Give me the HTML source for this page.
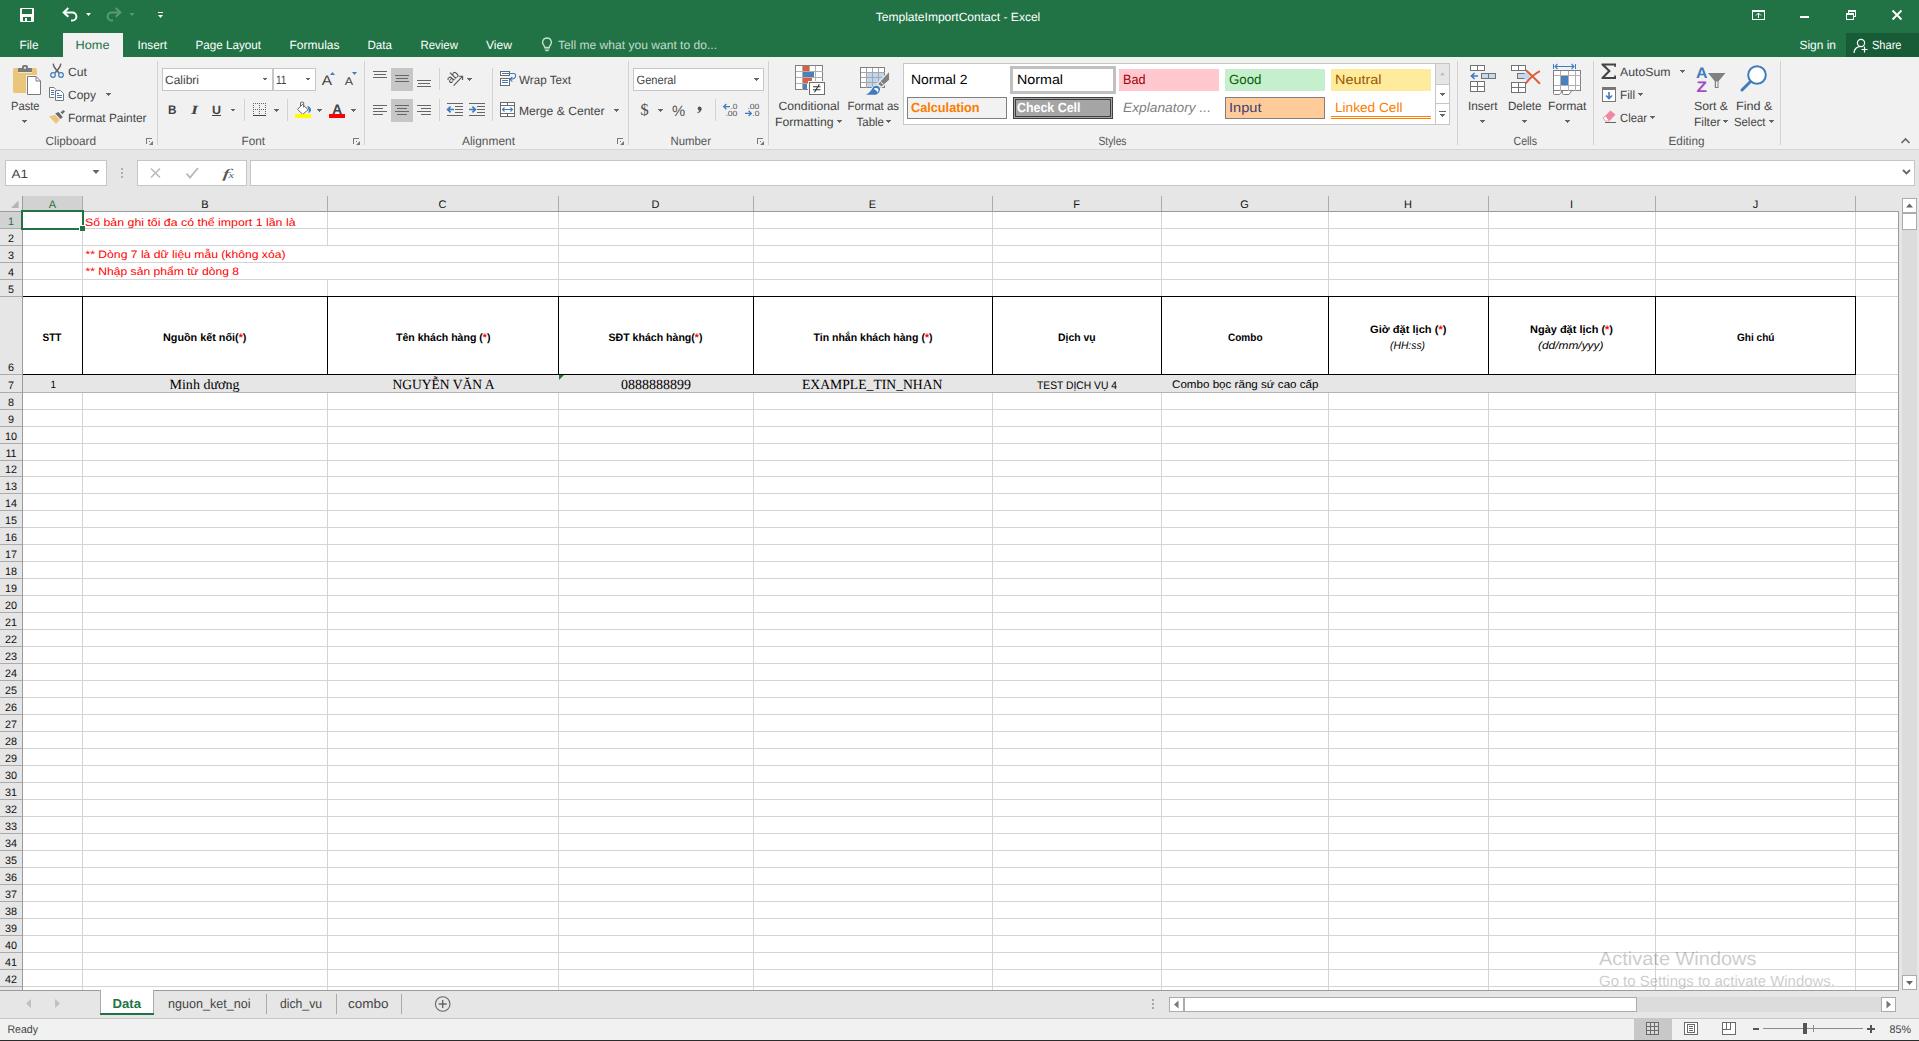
<!DOCTYPE html>
<html><head><meta charset="utf-8"><title>TemplateImportContact - Excel</title>
<style>
html,body{margin:0;padding:0;background:#fff;overflow:hidden}
svg{display:block}
svg{font-family:"Liberation Sans",sans-serif}
text{white-space:pre}
</style></head>
<body>
<svg width="1919" height="1041" viewBox="0 0 1919 1041" shape-rendering="crispEdges" text-rendering="geometricPrecision">
<rect x="0" y="0" width="1919" height="1041" fill="#FFFFFF" />
<rect x="0" y="0" width="1919" height="57" fill="#217346" />
<rect x="0" y="57" width="1919" height="92" fill="#F1F1F1" />
<rect x="0" y="149" width="1919" height="1" fill="#D6D6D6" />
<rect x="0" y="150" width="1919" height="62" fill="#E6E6E6" />
<rect x="0" y="991" width="1919" height="27" fill="#E6E6E6" />
<rect x="0" y="1018" width="1919" height="1" fill="#C6C6C6" />
<rect x="0" y="1019" width="1919" height="21" fill="#F1F1F1" />
<rect x="0" y="1040" width="1919" height="1" fill="#2B2B2B" />
<g shape-rendering="geometricPrecision">
<rect x="20" y="8" width="14" height="14" fill="#fff" rx="1"/>
<rect x="22" y="9" width="10" height="5" fill="#217346" />
<rect x="23" y="17" width="8" height="4" fill="#217346" />
<rect x="25" y="18" width="2" height="3" fill="#fff" />
<path d="M64 12.400h8.300a4.100 4.100 0 0 1 0 8.200h-1.300" fill="none" stroke="#fff" stroke-width="2" />
<path d="M68.3 8.100l-4.600 4.300l4.600 4.300" fill="none" stroke="#fff" stroke-width="2" />
<path d="M86.0 13.0h5l-2.5 3z" fill="#fff" />
<path d="M120 12.400h-8.300a4.100 4.100 0 0 0 0 8.200h1.300" fill="none" stroke="#5B9A78" stroke-width="2" />
<path d="M115.7 8.100l4.600 4.300l-4.600 4.300" fill="none" stroke="#5B9A78" stroke-width="2" />
<path d="M129.5 13.0h5l-2.5 3z" fill="#5B9A78" />
<rect x="158" y="12" width="5" height="1" fill="#fff" />
<path d="M158.0 15.0h5l-2.5 3z" fill="#fff" />
</g>
<text x="875.70" y="20.80" font-size="12" fill="#fff" textLength="164.60" lengthAdjust="spacingAndGlyphs">TemplateImportContact - Excel</text>
<g shape-rendering="crispEdges">
<rect x="1752.5" y="10.5" width="12" height="9" fill="none" stroke="#fff" stroke-width="1" />
<rect x="1752" y="10" width="13" height="2" fill="#fff" />
<path d="M1758.5 18v-4.5M1756 15.5l2.5-2.5l2.5 2.5" fill="none" stroke="#fff" stroke-width="1" shape-rendering="geometricPrecision"/>
<rect x="1800" y="16" width="9" height="2" fill="#fff" />
<rect x="1846.5" y="13.5" width="7" height="6" fill="none" stroke="#fff" stroke-width="1" />
<path d="M1848.5 13v-2.5h7v6h-2" fill="none" stroke="#fff" stroke-width="1" />
<rect x="1846" y="13" width="8" height="2" fill="#fff" />
<rect x="1848" y="10" width="8" height="2" fill="#fff" />
</g>
<path d="M1892.5 10.5l9 9M1901.5 10.5l-9 9" fill="none" stroke="#fff" stroke-width="1.8" shape-rendering="geometricPrecision"/>
<rect x="63" y="33" width="60" height="24" fill="#F1F1F1" />
<text x="19.50" y="49.40" font-size="12" fill="#fff" textLength="19.00" lengthAdjust="spacingAndGlyphs">File</text>
<text x="75.50" y="49.40" font-size="12" fill="#217346" textLength="34.00" lengthAdjust="spacingAndGlyphs">Home</text>
<text x="137.50" y="49.40" font-size="12" fill="#fff" textLength="29.50" lengthAdjust="spacingAndGlyphs">Insert</text>
<text x="195.50" y="49.40" font-size="12" fill="#fff" textLength="65.50" lengthAdjust="spacingAndGlyphs">Page Layout</text>
<text x="289.50" y="49.40" font-size="12" fill="#fff" textLength="50.00" lengthAdjust="spacingAndGlyphs">Formulas</text>
<text x="367.50" y="49.40" font-size="12" fill="#fff" textLength="24.50" lengthAdjust="spacingAndGlyphs">Data</text>
<text x="420.50" y="49.40" font-size="12" fill="#fff" textLength="37.50" lengthAdjust="spacingAndGlyphs">Review</text>
<text x="486.00" y="49.40" font-size="12" fill="#fff" textLength="26.00" lengthAdjust="spacingAndGlyphs">View</text>
<g shape-rendering="geometricPrecision">
<path d="M547 38a4.400 4.400 0 0 1 2.900 7.700l-.6 1.800h-4.600l-.6-1.800a4.400 4.400 0 0 1 2.900-7.700z" fill="none" stroke="#C3DBCD" stroke-width="1.3" />
<path d="M544.5 49h5M545.3 50.700h3.400" fill="none" stroke="#C3DBCD" stroke-width="1.2" />
</g>
<text x="558.00" y="49.00" font-size="12" fill="#C3DBCD" textLength="159.00" lengthAdjust="spacingAndGlyphs">Tell me what you want to do...</text>
<text x="1799.50" y="49.00" font-size="12" fill="#fff" textLength="36.50" lengthAdjust="spacingAndGlyphs">Sign in</text>
<rect x="1846" y="33" width="73" height="24" fill="#185C37" />
<g shape-rendering="geometricPrecision">
<circle cx="1861" cy="43" r="3.6" fill="none" stroke="#fff" stroke-width="1.2"/>
<path d="M1854 53c0-4 3-6.5 6.5-6.5" fill="none" stroke="#fff" stroke-width="1.2" />
<path d="M1864.5 46.5v6M1861.5 49.5h6" fill="none" stroke="#fff" stroke-width="1.2" />
</g>
<text x="1872.00" y="49.00" font-size="12" fill="#fff" textLength="29.50" lengthAdjust="spacingAndGlyphs">Share</text>
<rect x="157" y="61" width="1" height="84" fill="#D2D2D2" />
<rect x="364" y="61" width="1" height="84" fill="#D2D2D2" />
<rect x="628" y="61" width="1" height="84" fill="#D2D2D2" />
<rect x="768" y="61" width="1" height="84" fill="#D2D2D2" />
<rect x="1457" y="61" width="1" height="84" fill="#D2D2D2" />
<rect x="1593" y="61" width="1" height="84" fill="#D2D2D2" />
<rect x="1780" y="61" width="1" height="84" fill="#D2D2D2" />
<rect x="244" y="99" width="1" height="22" fill="#D2D2D2" />
<rect x="287" y="99" width="1" height="22" fill="#D2D2D2" />
<rect x="439" y="68" width="1" height="22" fill="#D2D2D2" />
<rect x="439" y="99" width="1" height="22" fill="#D2D2D2" />
<rect x="492" y="68" width="1" height="53" fill="#D2D2D2" />
<rect x="715" y="99" width="1" height="22" fill="#D2D2D2" />
<text x="45.50" y="145.00" font-size="12" fill="#555" textLength="50.50" lengthAdjust="spacingAndGlyphs">Clipboard</text>
<text x="241.50" y="145.00" font-size="12" fill="#555" textLength="23.50" lengthAdjust="spacingAndGlyphs">Font</text>
<text x="462.00" y="145.00" font-size="12" fill="#555" textLength="53.00" lengthAdjust="spacingAndGlyphs">Alignment</text>
<text x="670.50" y="145.00" font-size="12" fill="#555" textLength="40.50" lengthAdjust="spacingAndGlyphs">Number</text>
<text x="1098.50" y="145.00" font-size="12" fill="#555" textLength="28.00" lengthAdjust="spacingAndGlyphs">Styles</text>
<text x="1513.50" y="145.00" font-size="12" fill="#555" textLength="23.50" lengthAdjust="spacingAndGlyphs">Cells</text>
<text x="1668.50" y="145.00" font-size="12" fill="#555" textLength="36.00" lengthAdjust="spacingAndGlyphs">Editing</text>
<rect x="146" y="138" width="6" height="1" fill="#777" />
<rect x="146" y="138" width="1" height="6" fill="#777" />
<rect x="149" y="141" width="1" height="1" fill="#777" />
<path d="M153 141v4h-4z" fill="#777" shape-rendering="geometricPrecision"/>
<rect x="353" y="138" width="6" height="1" fill="#777" />
<rect x="353" y="138" width="1" height="6" fill="#777" />
<rect x="356" y="141" width="1" height="1" fill="#777" />
<path d="M360 141v4h-4z" fill="#777" shape-rendering="geometricPrecision"/>
<rect x="617" y="138" width="6" height="1" fill="#777" />
<rect x="617" y="138" width="1" height="6" fill="#777" />
<rect x="620" y="141" width="1" height="1" fill="#777" />
<path d="M624 141v4h-4z" fill="#777" shape-rendering="geometricPrecision"/>
<rect x="757" y="138" width="6" height="1" fill="#777" />
<rect x="757" y="138" width="1" height="6" fill="#777" />
<rect x="760" y="141" width="1" height="1" fill="#777" />
<path d="M764 141v4h-4z" fill="#777" shape-rendering="geometricPrecision"/>
<g shape-rendering="geometricPrecision">
<rect x="13" y="68" width="24" height="25" fill="#EBC57A" rx="1.5"/>
<rect x="18" y="72" width="14" height="1" fill="#F3E6C8" />
<path d="M18 72v-3.3q0-.7.7-.7h3.3v-1.2q0-1.8 1.8-1.8h2.4q1.8 0 1.8 1.8v1.2h3.3q.7 0 .7.7v3.3z" fill="#7A7A7A" />
<circle cx="25" cy="67.8" r="1.1" fill="#F1F1F1"/>
<path d="M27.5 76.5h8.5l4.5 4.5V94.5h-13z" fill="#fff" stroke="#F1F1F1" stroke-width="3" />
<path d="M27.5 76.5h8.5l4.5 4.5V94.5h-13z" fill="#fff" stroke="#7A7A7A" stroke-width="1" />
<path d="M36 76.5v4.5h4.5" fill="none" stroke="#7A7A7A" stroke-width="1" />
</g>
<text x="11.00" y="110.00" font-size="12" fill="#444444" textLength="28.50" lengthAdjust="spacingAndGlyphs">Paste</text>
<path d="M22.0 120.0h5l-2.5 3z" fill="#666" />
<g shape-rendering="geometricPrecision">
<path d="M53.2 63.6c.3 3.5 2.5 6 5.8 9.3M60.8 63.6c-.3 3.5-2.5 6-5.8 9.3" fill="none" stroke="#666" stroke-width="1.5" />
<circle cx="53" cy="75" r="2.3" fill="none" stroke="#3F7BBF" stroke-width="1.2"/>
<circle cx="61" cy="75" r="2.3" fill="none" stroke="#3F7BBF" stroke-width="1.2"/>
</g>
<text x="68.00" y="76.00" font-size="12" fill="#444444" textLength="19.00" lengthAdjust="spacingAndGlyphs">Cut</text>
<g shape-rendering="geometricPrecision">
<path d="M49.5 87.5h4.5l2.5 2.5v7.5h-7z" fill="#fff" stroke="#777" stroke-width="1" />
<path d="M55.5 90.5h5l3 3v7h-8z" fill="#fff" stroke="#F1F1F1" stroke-width="2.5" />
<path d="M55.5 90.5h5l3 3v7h-8z" fill="#fff" stroke="#777" stroke-width="1" />
</g>
<g shape-rendering="crispEdges">
<rect x="51" y="90" width="3" height="1" fill="#3F7BBF" />
<rect x="51" y="92" width="3" height="1" fill="#3F7BBF" />
<rect x="51" y="94" width="3" height="1" fill="#3F7BBF" />
<rect x="57" y="93" width="2" height="1" fill="#3F7BBF" />
<rect x="57" y="95" width="5" height="1" fill="#3F7BBF" />
<rect x="57" y="97" width="5" height="1" fill="#3F7BBF" />
</g>
<text x="68.00" y="99.00" font-size="12" fill="#444444" textLength="28.00" lengthAdjust="spacingAndGlyphs">Copy</text>
<path d="M106.0 93.0h5l-2.5 3z" fill="#666" />
<g shape-rendering="geometricPrecision">
<path d="M49.1 116.5l5.9-1.8l4.7 5.3l-3.7 3.7z" fill="#EBC57A" />
<path d="M55.2 113.6l3.4-1.6l4.2 5.3l-2.4 1.8z" fill="#6A6A6A" />
<path d="M60.5 112.2l3-2.2l1.5 1.6l-2.7 2.6z" fill="#6A6A6A" />
</g>
<text x="68.00" y="122.00" font-size="12" fill="#444444" textLength="78.50" lengthAdjust="spacingAndGlyphs">Format Painter</text>
<rect x="162.5" y="68.5" width="110" height="22" fill="#fff" stroke="#C6C6C6" stroke-width="1" />
<rect x="273.5" y="68.5" width="42" height="22" fill="#fff" stroke="#C6C6C6" stroke-width="1" />
<text x="165.00" y="84.00" font-size="12" fill="#444444" textLength="34.00" lengthAdjust="spacingAndGlyphs">Calibri</text>
<path d="M262.5 78.0h5l-2.5 3z" fill="#666" />
<text x="276.00" y="84.00" font-size="12" fill="#444444" textLength="10.50" lengthAdjust="spacingAndGlyphs">11</text>
<path d="M305.5 78.0h5l-2.5 3z" fill="#666" />
<text x="321.70" y="84.90" font-size="14" fill="#444444" textLength="10.30" lengthAdjust="spacingAndGlyphs">A</text>
<path d="M330 75l2.500-3.100l2.500 3.100z" fill="#3F7BBF" shape-rendering="geometricPrecision"/>
<text x="344.70" y="84.90" font-size="11.2" fill="#444444" textLength="8.30" lengthAdjust="spacingAndGlyphs">A</text>
<path d="M352 72h5l-2.500 3.100z" fill="#3F7BBF" shape-rendering="geometricPrecision"/>
<text x="168.00" y="114.00" font-size="12.5" fill="#444444" font-weight="bold" textLength="8.50" lengthAdjust="spacingAndGlyphs">B</text>
<text x="191.00" y="114.00" font-size="12.5" fill="#444444" font-family="Liberation Serif" font-weight="bold" font-style="italic" textLength="7.00" lengthAdjust="spacingAndGlyphs">I</text>
<text x="212.00" y="113.50" font-size="12" fill="#444444" font-weight="bold" textLength="9.00" lengthAdjust="spacingAndGlyphs">U</text>
<rect x="212" y="115" width="9" height="1" fill="#444444" />
<path d="M230.5 109.0h5l-2.5 3z" fill="#666" />
<g shape-rendering="crispEdges">
<rect x="253" y="103" width="1" height="1" fill="#666" />
<rect x="253" y="109" width="1" height="1" fill="#666" />
<rect x="253" y="103" width="1" height="1" fill="#666" />
<rect x="259" y="103" width="1" height="1" fill="#666" />
<rect x="265" y="103" width="1" height="1" fill="#666" />
<rect x="255" y="103" width="1" height="1" fill="#666" />
<rect x="255" y="109" width="1" height="1" fill="#666" />
<rect x="253" y="105" width="1" height="1" fill="#666" />
<rect x="259" y="105" width="1" height="1" fill="#666" />
<rect x="265" y="105" width="1" height="1" fill="#666" />
<rect x="257" y="103" width="1" height="1" fill="#666" />
<rect x="257" y="109" width="1" height="1" fill="#666" />
<rect x="253" y="107" width="1" height="1" fill="#666" />
<rect x="259" y="107" width="1" height="1" fill="#666" />
<rect x="265" y="107" width="1" height="1" fill="#666" />
<rect x="259" y="103" width="1" height="1" fill="#666" />
<rect x="259" y="109" width="1" height="1" fill="#666" />
<rect x="253" y="109" width="1" height="1" fill="#666" />
<rect x="259" y="109" width="1" height="1" fill="#666" />
<rect x="265" y="109" width="1" height="1" fill="#666" />
<rect x="261" y="103" width="1" height="1" fill="#666" />
<rect x="261" y="109" width="1" height="1" fill="#666" />
<rect x="253" y="111" width="1" height="1" fill="#666" />
<rect x="259" y="111" width="1" height="1" fill="#666" />
<rect x="265" y="111" width="1" height="1" fill="#666" />
<rect x="263" y="103" width="1" height="1" fill="#666" />
<rect x="263" y="109" width="1" height="1" fill="#666" />
<rect x="253" y="113" width="1" height="1" fill="#666" />
<rect x="259" y="113" width="1" height="1" fill="#666" />
<rect x="265" y="113" width="1" height="1" fill="#666" />
<rect x="265" y="103" width="1" height="1" fill="#666" />
<rect x="265" y="109" width="1" height="1" fill="#666" />
<rect x="253" y="115" width="1" height="1" fill="#666" />
<rect x="259" y="115" width="1" height="1" fill="#666" />
<rect x="265" y="115" width="1" height="1" fill="#666" />
<rect x="253" y="115" width="13" height="1" fill="#444" />
</g>
<path d="M274.0 109.0h5l-2.5 3z" fill="#666" />
<g shape-rendering="geometricPrecision">
<path d="M297.5 109.4l5-5l5.600 5.300l-5.300 4.700z" fill="#fff" stroke="#666" stroke-width="1" />
<path d="M300.5 106.3v-3.300q0-.8.8-.8h1.600q.8 0 .8.8v4.600" fill="none" stroke="#666" stroke-width="1" />
<path d="M307.2 105.800c2.600.900 4.300 2.600 3.800 4.600c-.3 1.200-1.300 2.100-2.600 2.600c.5-2 .400-3.200-.2-4.300z" fill="#3F7BBF" />
</g>
<rect x="295" y="114" width="16" height="4" fill="#FFFF00" />
<path d="M317.0 109.0h5l-2.5 3z" fill="#666" />
<text x="332.30" y="114.00" font-size="13.8" fill="#444444" font-weight="bold" textLength="9.90" lengthAdjust="spacingAndGlyphs">A</text>
<rect x="329" y="114" width="16" height="4" fill="#FF0000" />
<path d="M351.0 109.0h5l-2.5 3z" fill="#666" />
<rect x="391" y="68" width="22" height="23" fill="#C6C6C6" />
<rect x="391" y="99" width="22" height="23" fill="#C6C6C6" />
<rect x="373.0" y="71" width="14" height="1" fill="#666" />
<rect x="374.0" y="74" width="12" height="1" fill="#666" />
<rect x="373.0" y="77" width="14" height="1" fill="#666" />
<rect x="395.0" y="75" width="14" height="1" fill="#666" />
<rect x="396.0" y="78" width="12" height="1" fill="#666" />
<rect x="395.0" y="81" width="14" height="1" fill="#666" />
<rect x="417.0" y="80" width="14" height="1" fill="#666" />
<rect x="418.0" y="83" width="12" height="1" fill="#666" />
<rect x="417.0" y="86" width="14" height="1" fill="#666" />
<rect x="373" y="105" width="14" height="1" fill="#666" />
<rect x="373" y="108" width="10" height="1" fill="#666" />
<rect x="373" y="111" width="14" height="1" fill="#666" />
<rect x="373" y="114" width="10" height="1" fill="#666" />
<rect x="395.0" y="105" width="14" height="1" fill="#666" />
<rect x="397.0" y="108" width="10" height="1" fill="#666" />
<rect x="395.0" y="111" width="14" height="1" fill="#666" />
<rect x="397.0" y="114" width="10" height="1" fill="#666" />
<rect x="417" y="105" width="14" height="1" fill="#666" />
<rect x="421" y="108" width="10" height="1" fill="#666" />
<rect x="417" y="111" width="14" height="1" fill="#666" />
<rect x="421" y="114" width="10" height="1" fill="#666" />
<g shape-rendering="geometricPrecision">
<text transform="translate(450.6 83.9) rotate(-45)" font-size="11.5" fill="#444" style="text-rendering:geometricPrecision">ab</text>
<path d="M453.6 85.6l8.700-9M458.8 76.300h3.800v3.800" fill="none" stroke="#555" stroke-width="1.1" />
</g>
<path d="M467.0 78.0h5l-2.5 3z" fill="#666" />
<rect x="447" y="103" width="16" height="1" fill="#666" />
<rect x="455" y="106" width="8" height="1" fill="#666" />
<rect x="455" y="109" width="8" height="1" fill="#666" />
<rect x="455" y="112" width="8" height="1" fill="#666" />
<rect x="447" y="115" width="16" height="1" fill="#666" />
<path d="M454 109.5h-6M450.6 106.6l-3 2.9l3 2.9" fill="none" stroke="#3F7BBF" stroke-width="1.7" shape-rendering="geometricPrecision"/>
<rect x="469" y="103" width="16" height="1" fill="#666" />
<rect x="477" y="106" width="8" height="1" fill="#666" />
<rect x="477" y="109" width="8" height="1" fill="#666" />
<rect x="477" y="112" width="8" height="1" fill="#666" />
<rect x="469" y="115" width="16" height="1" fill="#666" />
<path d="M469 109.5h6M472.4 106.6l3 2.9l-3 2.9" fill="none" stroke="#3F7BBF" stroke-width="1.7" shape-rendering="geometricPrecision"/>
<g shape-rendering="crispEdges">
<rect x="500.5" y="71.5" width="9" height="4" fill="#fff" stroke="#6A6A6A" stroke-width="1" />
<rect x="500.5" y="78.5" width="9" height="7" fill="#fff" stroke="#6A6A6A" stroke-width="1" />
<rect x="502" y="73" width="12" height="1" fill="#3F7BBF" />
<rect x="502" y="80" width="6" height="1" fill="#3F7BBF" />
<rect x="502" y="82" width="6" height="1" fill="#3F7BBF" />
</g>
<path d="M513.5 73.5c3.300 0 3.300 5.800-3 5.800M512.4 77l-2.500 2.300l2.500 2.300" fill="none" stroke="#3F7BBF" stroke-width="1.1" shape-rendering="geometricPrecision"/>
<text x="519.00" y="84.00" font-size="12" fill="#444444" textLength="52.00" lengthAdjust="spacingAndGlyphs">Wrap Text</text>
<g shape-rendering="crispEdges">
<rect x="500.5" y="102.5" width="14" height="14" fill="#fff" stroke="#6A6A6A" stroke-width="1" />
<rect x="501" y="105" width="14" height="1" fill="#6A6A6A" />
<rect x="501" y="113" width="14" height="1" fill="#6A6A6A" />
<rect x="507" y="103" width="1" height="2" fill="#6A6A6A" />
<rect x="507" y="114" width="1" height="2" fill="#6A6A6A" />
<rect x="503" y="109" width="9" height="1" fill="#3F7BBF" />
</g>
<path d="M504.5 107.5l-2 2l2 2M510.5 107.5l2 2l-2 2" fill="none" stroke="#3F7BBF" stroke-width="1.1" shape-rendering="geometricPrecision"/>
<text x="519.00" y="115.00" font-size="12" fill="#444444" textLength="85.50" lengthAdjust="spacingAndGlyphs">Merge &amp; Center</text>
<path d="M614.0 109.0h5l-2.5 3z" fill="#666" />
<rect x="633.5" y="68.5" width="130" height="22" fill="#fff" stroke="#C6C6C6" stroke-width="1" />
<text x="636.50" y="84.00" font-size="12" fill="#444444" textLength="39.50" lengthAdjust="spacingAndGlyphs">General</text>
<path d="M754.0 78.0h5l-2.5 3z" fill="#666" />
<text x="640.30" y="115.40" font-size="16.5" fill="#555" font-family="Liberation Serif" textLength="8.50" lengthAdjust="spacingAndGlyphs">$</text>
<path d="M658.0 109.0h5l-2.5 3z" fill="#666" />
<text x="672.00" y="115.70" font-size="15" fill="#555" textLength="13.20" lengthAdjust="spacingAndGlyphs">%</text>
<g shape-rendering="geometricPrecision">
<circle cx="699.6" cy="108.5" r="1.9" fill="#555"/>
<path d="M701.5 108.300c.4 2.500-1.100 4.100-3.900 5l-.4-.8c1.600-.7 2.400-1.600 2.200-2.800z" fill="#555" />
</g>
<text x="730.40" y="108.80" font-size="7.6" fill="#555" textLength="7.00" lengthAdjust="spacingAndGlyphs">.0</text>
<text x="725.40" y="115.80" font-size="7.6" fill="#555" textLength="12.00" lengthAdjust="spacingAndGlyphs">.00</text>
<path d="M730 106.600h-6.200M726.4 104l-2.700 2.600l2.700 2.600" fill="none" stroke="#3F7BBF" stroke-width="1.3" shape-rendering="geometricPrecision"/>
<text x="747.40" y="108.80" font-size="7.6" fill="#555" textLength="12.00" lengthAdjust="spacingAndGlyphs">.00</text>
<text x="752.30" y="115.80" font-size="7.6" fill="#555" textLength="7.10" lengthAdjust="spacingAndGlyphs">.0</text>
<path d="M745 113.400h6.200M748.6 110.800l2.700 2.600l-2.700 2.600" fill="none" stroke="#3F7BBF" stroke-width="1.3" shape-rendering="geometricPrecision"/>
<g shape-rendering="crispEdges">
<rect x="795.5" y="65.5" width="27" height="24" fill="#fff" stroke="#808080" stroke-width="1" />
<rect x="802" y="66" width="1" height="24" fill="#B0B0B0" />
<rect x="809" y="66" width="1" height="24" fill="#B0B0B0" />
<rect x="815" y="66" width="1" height="24" fill="#B0B0B0" />
<rect x="796" y="71" width="27" height="1" fill="#B0B0B0" />
<rect x="796" y="77" width="27" height="1" fill="#B0B0B0" />
<rect x="796" y="83" width="27" height="1" fill="#B0B0B0" />
<rect x="803" y="66" width="6" height="5" fill="#DB5F3C" />
<rect x="803" y="72" width="11" height="5" fill="#4A81BD" />
<rect x="803" y="78" width="9" height="5" fill="#DB5F3C" />
<rect x="803" y="84" width="4" height="5" fill="#4A81BD" />
<rect x="808" y="81" width="18" height="15" fill="#F1F1F1" />
<rect x="809.5" y="82.5" width="15" height="12" fill="#fff" stroke="#6E6E6E" stroke-width="1" />
</g>
<path d="M813 86.8h7.5M813 89.8h7.5M819.3 84.3l-4.8 8" fill="none" stroke="#333" stroke-width="1.1" shape-rendering="geometricPrecision"/>
<text x="778.50" y="110.00" font-size="12" fill="#444444" textLength="61.00" lengthAdjust="spacingAndGlyphs">Conditional</text>
<text x="775.00" y="126.00" font-size="12" fill="#444444" textLength="58.50" lengthAdjust="spacingAndGlyphs">Formatting</text>
<path d="M837.0 120.0h5l-2.5 3z" fill="#666" />
<g shape-rendering="crispEdges">
<rect x="860.5" y="67.5" width="24" height="20" fill="#fff" stroke="#808080" stroke-width="1" />
<rect x="867" y="73" width="17" height="14" fill="#BDD7EE" />
<rect x="866" y="68" width="1" height="20" fill="#A6A6A6" />
<rect x="872" y="68" width="1" height="20" fill="#A6A6A6" />
<rect x="878" y="68" width="1" height="20" fill="#A6A6A6" />
<rect x="861" y="72" width="24" height="1" fill="#A6A6A6" />
<rect x="861" y="77" width="24" height="1" fill="#A6A6A6" />
<rect x="861" y="82" width="24" height="1" fill="#A6A6A6" />
</g>
<g shape-rendering="geometricPrecision">
<path d="M889.3 71.5l.2 8.5l-8 7l-4-3.2z" fill="#F1F1F1" stroke="#F1F1F1" stroke-width="1.6" />
<path d="M889 72.3l.1 7.4l-7.6 6.8l-3.4-2.6z" fill="#808080" />
<path d="M880.4 81.6l3.2 2.9" fill="none" stroke="#F1F1F1" stroke-width="1" />
<path d="M866 94.8c4.2-2.3 5.5-5 7.3-8c2-1.7 5-1.3 6.4.9c1 2.4-.3 5-3.7 7.1z" fill="#F1F1F1" stroke="#F1F1F1" stroke-width="1.6" />
<path d="M866 94.8c4.2-2.3 5.5-5 7.3-8c2-1.7 5-1.3 6.4.9c1 2.4-.3 5-3.7 7.1z" fill="#3F7BBF" />
<path d="M873.6 89c1.8-1.6 3.8-1.2 4.7.3c.5 1-.1 2.5-.8 3.3c-.5-1.5-1.8-2.8-3.9-3.6z" fill="#fff" />
</g>
<text x="847.50" y="110.00" font-size="12" fill="#444444" textLength="51.50" lengthAdjust="spacingAndGlyphs">Format as</text>
<text x="856.50" y="126.00" font-size="12" fill="#444444" textLength="27.50" lengthAdjust="spacingAndGlyphs">Table</text>
<path d="M886.0 120.0h5l-2.5 3z" fill="#666" />
<rect x="903.5" y="63.5" width="546" height="61" fill="#fff" stroke="#C6C6C6" stroke-width="1" />
<rect x="1435" y="64" width="1" height="60" fill="#C6C6C6" />
<rect x="1436" y="64" width="13" height="20" fill="#E6E6E6" />
<rect x="1436" y="84" width="13" height="1" fill="#C6C6C6" />
<rect x="1436" y="103" width="13" height="1" fill="#C6C6C6" />
<path d="M1440 75.200l2.500-3l2.500 3z" fill="#BDBDBD" shape-rendering="geometricPrecision"/>
<path d="M1440.0 93.0h5l-2.5 3z" fill="#666" />
<rect x="1439" y="111" width="7" height="1" fill="#666" />
<path d="M1440.0 114.0h5l-2.5 3z" fill="#666" />
<text x="911.00" y="84.00" font-size="13.3" fill="#000" textLength="56.50" lengthAdjust="spacingAndGlyphs">Normal 2</text>
<rect x="1011.5" y="67.5" width="103" height="25" fill="#fff" stroke="#C0C0C0" stroke-width="3" />
<text x="1017.00" y="84.00" font-size="13.3" fill="#000" textLength="46.00" lengthAdjust="spacingAndGlyphs">Normal</text>
<rect x="1119" y="69" width="100" height="22" fill="#FFC7CE" />
<text x="1123.00" y="84.00" font-size="13.3" fill="#9C0006" textLength="22.50" lengthAdjust="spacingAndGlyphs">Bad</text>
<rect x="1225" y="69" width="100" height="22" fill="#C6EFCE" />
<text x="1229.00" y="84.00" font-size="13.3" fill="#006100" textLength="32.50" lengthAdjust="spacingAndGlyphs">Good</text>
<rect x="1331" y="69" width="100" height="22" fill="#FFEB9C" />
<text x="1335.00" y="84.00" font-size="13.3" fill="#9C5700" textLength="46.50" lengthAdjust="spacingAndGlyphs">Neutral</text>
<rect x="907.5" y="97.5" width="99" height="21" fill="#F2F2F2" stroke="#7F7F7F" stroke-width="1" />
<text x="911.00" y="112.00" font-size="13.3" fill="#FA7D00" font-weight="bold" textLength="68.50" lengthAdjust="spacingAndGlyphs">Calculation</text>
<rect x="1013.5" y="97.5" width="99" height="21" fill="#A5A5A5" stroke="#3F3F3F" stroke-width="1" />
<rect x="1015.5" y="99.5" width="95" height="17" fill="none" stroke="#3F3F3F" stroke-width="1" />
<text x="1017.00" y="112.00" font-size="13.3" fill="#fff" font-weight="bold" textLength="63.50" lengthAdjust="spacingAndGlyphs">Check Cell</text>
<text x="1123.00" y="112.00" font-size="13.3" fill="#7F7F7F" font-style="italic" textLength="88.00" lengthAdjust="spacingAndGlyphs">Explanatory ...</text>
<rect x="1225.5" y="97.5" width="99" height="21" fill="#FFCC99" stroke="#7F7F7F" stroke-width="1" />
<text x="1229.00" y="112.00" font-size="13.3" fill="#3F3F76" textLength="32.50" lengthAdjust="spacingAndGlyphs">Input</text>
<text x="1335.00" y="112.00" font-size="13.3" fill="#FA7D00" textLength="67.50" lengthAdjust="spacingAndGlyphs">Linked Cell</text>
<rect x="1331" y="116" width="100" height="1" fill="#FF8001" />
<rect x="1331" y="118" width="100" height="1" fill="#FF8001" />
<g shape-rendering="crispEdges">
<rect x="1470.5" y="65.5" width="14" height="5" fill="#fff" stroke="#737373" stroke-width="1" />
<rect x="1477" y="66" width="1" height="5" fill="#737373" />
<rect x="1481.5" y="73.5" width="14" height="5" fill="#C5D9F0" stroke="#737373" stroke-width="1" />
<rect x="1488" y="74" width="1" height="5" fill="#737373" />
<rect x="1470.5" y="81.5" width="14" height="10" fill="#fff" stroke="#737373" stroke-width="1" />
<rect x="1477" y="82" width="1" height="10" fill="#737373" />
<rect x="1471" y="86" width="14" height="1" fill="#737373" />
<rect x="1511.5" y="65.5" width="14" height="5" fill="#fff" stroke="#737373" stroke-width="1" />
<rect x="1518" y="66" width="1" height="5" fill="#737373" />
<rect x="1517.5" y="73.5" width="10" height="5" fill="#C5D9F0" stroke="#737373" stroke-width="1" />
<rect x="1511.5" y="82.5" width="14" height="10" fill="#fff" stroke="#737373" stroke-width="1" />
<rect x="1518" y="83" width="1" height="10" fill="#737373" />
<rect x="1512" y="87" width="14" height="1" fill="#737373" />
<rect x="1553.5" y="70.5" width="27" height="20" fill="#fff" stroke="#808080" stroke-width="1" />
<rect x="1560" y="71" width="1" height="20" fill="#B0B0B0" />
<rect x="1568" y="71" width="1" height="20" fill="#B0B0B0" />
<rect x="1575" y="71" width="1" height="20" fill="#B0B0B0" />
<rect x="1554" y="75" width="27" height="1" fill="#B0B0B0" />
<rect x="1554" y="85" width="27" height="1" fill="#B0B0B0" />
<rect x="1561" y="76" width="7" height="9" fill="#4A81BD" />
<rect x="1553" y="64" width="1" height="5" fill="#3F7BBF" />
<rect x="1575" y="64" width="1" height="5" fill="#3F7BBF" />
<rect x="1555" y="66" width="19" height="1" fill="#3F7BBF" />
</g>
<g shape-rendering="geometricPrecision">
<path d="M1478 76h-6.5M1474.6 73l-3.2 3l3.2 3" fill="none" stroke="#3F7BBF" stroke-width="1.6" />
<path d="M1524.5 72.5h4l2.5 3.5l-2.5 3.5h-4z" fill="#C5D9F0" />
<path d="M1526 70.3c4 3.5 8.5 8 13.9 13.4M1539.9 71.2c-5 2.5-10 7-14.2 12.2" fill="none" stroke="#DB5F3C" stroke-width="2" />
<path d="M1557.5 64l-2.5 2.5l2.5 2.5M1571.5 64l2.5 2.5l-2.5 2.5" fill="none" stroke="#3F7BBF" stroke-width="1.1" />
<path d="M1553.5 91v2.5q0 1 1 1h5l2-2.5v-1M1562.5 91v2.5q0 1 1 1h5.500l2.5-3.500" fill="#fff" stroke="#808080" stroke-width="1" />
</g>
<text x="1468.00" y="110.00" font-size="12" fill="#444444" textLength="29.50" lengthAdjust="spacingAndGlyphs">Insert</text>
<path d="M1480.0 120.0h5l-2.5 3z" fill="#666" />
<text x="1508.00" y="110.00" font-size="12" fill="#444444" textLength="33.50" lengthAdjust="spacingAndGlyphs">Delete</text>
<path d="M1522.0 120.0h5l-2.5 3z" fill="#666" />
<text x="1548.00" y="110.00" font-size="12" fill="#444444" textLength="38.50" lengthAdjust="spacingAndGlyphs">Format</text>
<path d="M1565.0 120.0h5l-2.5 3z" fill="#666" />
<path d="M1601.5 63.5h14.5v3.300h-1.800v-1.300h-9l5.600 5.500l-5.900 6h9.300v-1.500h1.800v3.500h-14.500v-1.600l6.400-6.400l-6.400-6z" fill="#444" shape-rendering="geometricPrecision"/>
<text x="1620.00" y="76.00" font-size="12" fill="#444444" textLength="50.50" lengthAdjust="spacingAndGlyphs">AutoSum</text>
<path d="M1680.0 70.0h5l-2.5 3z" fill="#666" />
<g shape-rendering="crispEdges">
<rect x="1602.5" y="87.5" width="13" height="14" fill="#fff" stroke="#777" stroke-width="1" />
<rect x="1602" y="87" width="14" height="3" fill="#777" />
</g>
<path d="M1609 92v6.5M1606 95.5l3 3l3-3" fill="none" stroke="#3F7BBF" stroke-width="1.6" shape-rendering="geometricPrecision"/>
<text x="1620.00" y="99.00" font-size="12" fill="#444444" textLength="15.00" lengthAdjust="spacingAndGlyphs">Fill</text>
<path d="M1638.0 93.0h5l-2.5 3z" fill="#666" />
<g shape-rendering="geometricPrecision">
<path d="M1603 118l7.5-7.5l5 4l-6 6.5h-4z" fill="#EE8AA0" />
<path d="M1603 118l2.5 3h4l-4-5z" fill="#fff" stroke="#EE8AA0" stroke-width="0.8" />
<path d="M1605 122.5h11" fill="none" stroke="#666" stroke-width="1" />
</g>
<text x="1620.00" y="122.00" font-size="12" fill="#444444" textLength="27.00" lengthAdjust="spacingAndGlyphs">Clear</text>
<path d="M1650.0 116.0h5l-2.5 3z" fill="#666" />
<text x="1696.00" y="77.60" font-size="15.3" fill="#3F7BBF" font-weight="bold" textLength="11.50" lengthAdjust="spacingAndGlyphs">A</text>
<text x="1696.50" y="91.90" font-size="15.3" fill="#A349C4" font-weight="bold" textLength="10.50" lengthAdjust="spacingAndGlyphs">Z</text>
<g shape-rendering="geometricPrecision">
<path d="M1708 73h17.5l-7 8.2v6.800h-3.700v-6.800z" fill="#808080" />
<path d="M1716 81.5h1.500v5.500h-1.500z" fill="#F1F1F1" />
</g>
<text x="1694.00" y="110.00" font-size="12" fill="#444444" textLength="34.00" lengthAdjust="spacingAndGlyphs">Sort &amp;</text>
<text x="1694.00" y="126.00" font-size="12" fill="#444444" textLength="26.50" lengthAdjust="spacingAndGlyphs">Filter</text>
<path d="M1723.0 120.0h5l-2.5 3z" fill="#666" />
<g shape-rendering="geometricPrecision">
<circle cx="1757" cy="75" r="8.8" fill="#fff" stroke="#3F7BBF" stroke-width="2"/>
<path d="M1750.3 81.700l-8.300 8.300" fill="none" stroke="#3F7BBF" stroke-width="3" stroke-linecap="round"/>
</g>
<text x="1736.00" y="110.00" font-size="12" fill="#444444" textLength="36.50" lengthAdjust="spacingAndGlyphs">Find &amp;</text>
<text x="1734.00" y="126.00" font-size="12" fill="#444444" textLength="31.50" lengthAdjust="spacingAndGlyphs">Select</text>
<path d="M1769.0 120.0h5l-2.5 3z" fill="#666" />
<path d="M1901.5 143l4-4l4 4" fill="none" stroke="#666" stroke-width="1.6" shape-rendering="geometricPrecision"/>
<rect x="5.5" y="160.5" width="101" height="25" fill="#fff" stroke="#C6C6C6" stroke-width="1" />
<text x="11.50" y="177.50" font-size="12" fill="#444444" textLength="16.50" lengthAdjust="spacingAndGlyphs">A1</text>
<path d="M92.5 170h7l-3.5 4z" fill="#666" shape-rendering="geometricPrecision"/>
<rect x="121" y="168" width="2" height="2" fill="#B0B0B0" />
<rect x="121" y="172" width="2" height="2" fill="#B0B0B0" />
<rect x="121" y="176" width="2" height="2" fill="#B0B0B0" />
<rect x="137.5" y="160.5" width="109" height="25" fill="#fff" stroke="#C6C6C6" stroke-width="1" />
<g shape-rendering="geometricPrecision">
<path d="M151 168.5l9 9M160 168.5l-9 9" fill="none" stroke="#B8B8B8" stroke-width="1.5" />
<path d="M186.5 173.5l3.5 4l8-9.5" fill="none" stroke="#B8B8B8" stroke-width="1.8" />
</g>
<text x="222.00" y="177.50" font-size="13" fill="#555" font-family="Liberation Serif" font-style="italic" textLength="8.00" lengthAdjust="spacingAndGlyphs">f</text>
<text x="228.50" y="177.50" font-size="9" fill="#555" font-family="Liberation Serif" font-style="italic" textLength="5.50" lengthAdjust="spacingAndGlyphs">x</text>
<rect x="250.5" y="160.5" width="1664" height="25" fill="#fff" stroke="#C6C6C6" stroke-width="1" />
<path d="M1903 170l3.5 3.5l3.5-3.5" fill="none" stroke="#666" stroke-width="1.8" shape-rendering="geometricPrecision"/>
<rect x="23" y="212" width="1875" height="778" fill="#fff" />
<rect x="23" y="375" width="1832" height="17" fill="#E7E6E6" />
<rect x="23" y="228" width="1875" height="1" fill="#D4D4D4" />
<rect x="23" y="245" width="1875" height="1" fill="#D4D4D4" />
<rect x="23" y="262" width="1875" height="1" fill="#D4D4D4" />
<rect x="23" y="279" width="1875" height="1" fill="#D4D4D4" />
<rect x="23" y="296" width="1875" height="1" fill="#D4D4D4" />
<rect x="23" y="374" width="1875" height="1" fill="#D4D4D4" />
<rect x="23" y="392" width="1875" height="1" fill="#D4D4D4" />
<rect x="23" y="409" width="1875" height="1" fill="#D4D4D4" />
<rect x="23" y="426" width="1875" height="1" fill="#D4D4D4" />
<rect x="23" y="443" width="1875" height="1" fill="#D4D4D4" />
<rect x="23" y="460" width="1875" height="1" fill="#D4D4D4" />
<rect x="23" y="476" width="1875" height="1" fill="#D4D4D4" />
<rect x="23" y="493" width="1875" height="1" fill="#D4D4D4" />
<rect x="23" y="510" width="1875" height="1" fill="#D4D4D4" />
<rect x="23" y="527" width="1875" height="1" fill="#D4D4D4" />
<rect x="23" y="544" width="1875" height="1" fill="#D4D4D4" />
<rect x="23" y="561" width="1875" height="1" fill="#D4D4D4" />
<rect x="23" y="578" width="1875" height="1" fill="#D4D4D4" />
<rect x="23" y="595" width="1875" height="1" fill="#D4D4D4" />
<rect x="23" y="612" width="1875" height="1" fill="#D4D4D4" />
<rect x="23" y="629" width="1875" height="1" fill="#D4D4D4" />
<rect x="23" y="646" width="1875" height="1" fill="#D4D4D4" />
<rect x="23" y="663" width="1875" height="1" fill="#D4D4D4" />
<rect x="23" y="680" width="1875" height="1" fill="#D4D4D4" />
<rect x="23" y="697" width="1875" height="1" fill="#D4D4D4" />
<rect x="23" y="714" width="1875" height="1" fill="#D4D4D4" />
<rect x="23" y="731" width="1875" height="1" fill="#D4D4D4" />
<rect x="23" y="748" width="1875" height="1" fill="#D4D4D4" />
<rect x="23" y="765" width="1875" height="1" fill="#D4D4D4" />
<rect x="23" y="782" width="1875" height="1" fill="#D4D4D4" />
<rect x="23" y="799" width="1875" height="1" fill="#D4D4D4" />
<rect x="23" y="816" width="1875" height="1" fill="#D4D4D4" />
<rect x="23" y="833" width="1875" height="1" fill="#D4D4D4" />
<rect x="23" y="850" width="1875" height="1" fill="#D4D4D4" />
<rect x="23" y="867" width="1875" height="1" fill="#D4D4D4" />
<rect x="23" y="884" width="1875" height="1" fill="#D4D4D4" />
<rect x="23" y="901" width="1875" height="1" fill="#D4D4D4" />
<rect x="23" y="918" width="1875" height="1" fill="#D4D4D4" />
<rect x="23" y="935" width="1875" height="1" fill="#D4D4D4" />
<rect x="23" y="952" width="1875" height="1" fill="#D4D4D4" />
<rect x="23" y="969" width="1875" height="1" fill="#D4D4D4" />
<rect x="23" y="986" width="1875" height="1" fill="#D4D4D4" />
<rect x="82" y="212" width="1" height="778" fill="#D4D4D4" />
<rect x="327" y="212" width="1" height="778" fill="#D4D4D4" />
<rect x="558" y="212" width="1" height="778" fill="#D4D4D4" />
<rect x="753" y="212" width="1" height="778" fill="#D4D4D4" />
<rect x="992" y="212" width="1" height="778" fill="#D4D4D4" />
<rect x="1161" y="212" width="1" height="778" fill="#D4D4D4" />
<rect x="1328" y="212" width="1" height="778" fill="#D4D4D4" />
<rect x="1488" y="212" width="1" height="778" fill="#D4D4D4" />
<rect x="1655" y="212" width="1" height="778" fill="#D4D4D4" />
<rect x="1855" y="212" width="1" height="778" fill="#D4D4D4" />
<rect x="327" y="246" width="1" height="16" fill="#fff" />
<rect x="327" y="263" width="1" height="16" fill="#fff" />
<rect x="23" y="375" width="1832" height="17" fill="#E7E6E6" />
<rect x="23" y="392" width="1833" height="1" fill="#B4B4B4" />
<rect x="23" y="296" width="1833" height="1" fill="#000" />
<rect x="23" y="374" width="1833" height="1" fill="#000" />
<rect x="82" y="296" width="1" height="79" fill="#000" />
<rect x="327" y="296" width="1" height="79" fill="#000" />
<rect x="558" y="296" width="1" height="79" fill="#000" />
<rect x="753" y="296" width="1" height="79" fill="#000" />
<rect x="992" y="296" width="1" height="79" fill="#000" />
<rect x="1161" y="296" width="1" height="79" fill="#000" />
<rect x="1328" y="296" width="1" height="79" fill="#000" />
<rect x="1488" y="296" width="1" height="79" fill="#000" />
<rect x="1655" y="296" width="1" height="79" fill="#000" />
<rect x="1855" y="296" width="1" height="79" fill="#000" />
<rect x="0" y="196" width="1899" height="16" fill="#E6E6E6" />
<rect x="23" y="196" width="59" height="14" fill="#D2D2D2" />
<rect x="22" y="196" width="1" height="16" fill="#ABABAB" />
<rect x="82" y="196" width="1" height="16" fill="#ABABAB" />
<rect x="327" y="196" width="1" height="16" fill="#ABABAB" />
<rect x="558" y="196" width="1" height="16" fill="#ABABAB" />
<rect x="753" y="196" width="1" height="16" fill="#ABABAB" />
<rect x="992" y="196" width="1" height="16" fill="#ABABAB" />
<rect x="1161" y="196" width="1" height="16" fill="#ABABAB" />
<rect x="1328" y="196" width="1" height="16" fill="#ABABAB" />
<rect x="1488" y="196" width="1" height="16" fill="#ABABAB" />
<rect x="1655" y="196" width="1" height="16" fill="#ABABAB" />
<rect x="1855" y="196" width="1" height="16" fill="#ABABAB" />
<rect x="0" y="211" width="1899" height="1" fill="#9B9B9B" />
<path d="M18.5 200.5v7.5h-7.5z" fill="#B4B4B4" shape-rendering="geometricPrecision"/>
<text x="52.50" y="207.90" font-size="11" fill="#217346" text-anchor="middle">A</text>
<text x="205.00" y="207.90" font-size="11" fill="#111" text-anchor="middle">B</text>
<text x="442.50" y="207.90" font-size="11" fill="#111" text-anchor="middle">C</text>
<text x="655.50" y="207.90" font-size="11" fill="#111" text-anchor="middle">D</text>
<text x="872.50" y="207.90" font-size="11" fill="#111" text-anchor="middle">E</text>
<text x="1076.50" y="207.90" font-size="11" fill="#111" text-anchor="middle">F</text>
<text x="1244.50" y="207.90" font-size="11" fill="#111" text-anchor="middle">G</text>
<text x="1408.00" y="207.90" font-size="11" fill="#111" text-anchor="middle">H</text>
<text x="1571.50" y="207.90" font-size="11" fill="#111" text-anchor="middle">I</text>
<text x="1755.50" y="207.90" font-size="11" fill="#111" text-anchor="middle">J</text>
<rect x="0" y="212" width="22" height="778" fill="#E6E6E6" />
<rect x="0" y="212" width="22" height="16" fill="#D2D2D2" />
<rect x="0" y="228" width="22" height="1" fill="#ABABAB" />
<text x="11.00" y="224.80" font-size="10.8" fill="#217346" text-anchor="middle">1</text>
<rect x="0" y="245" width="22" height="1" fill="#ABABAB" />
<text x="11.00" y="241.80" font-size="10.8" fill="#111" text-anchor="middle">2</text>
<rect x="0" y="262" width="22" height="1" fill="#ABABAB" />
<text x="11.00" y="258.80" font-size="10.8" fill="#111" text-anchor="middle">3</text>
<rect x="0" y="279" width="22" height="1" fill="#ABABAB" />
<text x="11.00" y="275.80" font-size="10.8" fill="#111" text-anchor="middle">4</text>
<rect x="0" y="296" width="22" height="1" fill="#ABABAB" />
<text x="11.00" y="292.80" font-size="10.8" fill="#111" text-anchor="middle">5</text>
<rect x="0" y="374" width="22" height="1" fill="#ABABAB" />
<text x="11.00" y="370.80" font-size="10.8" fill="#111" text-anchor="middle">6</text>
<rect x="0" y="392" width="22" height="1" fill="#ABABAB" />
<text x="11.00" y="388.80" font-size="10.8" fill="#111" text-anchor="middle">7</text>
<rect x="0" y="409" width="22" height="1" fill="#ABABAB" />
<text x="11.00" y="405.80" font-size="10.8" fill="#111" text-anchor="middle">8</text>
<rect x="0" y="426" width="22" height="1" fill="#ABABAB" />
<text x="11.00" y="422.80" font-size="10.8" fill="#111" text-anchor="middle">9</text>
<rect x="0" y="443" width="22" height="1" fill="#ABABAB" />
<text x="11.00" y="439.80" font-size="10.8" fill="#111" text-anchor="middle">10</text>
<rect x="0" y="460" width="22" height="1" fill="#ABABAB" />
<text x="11.00" y="456.80" font-size="10.8" fill="#111" text-anchor="middle">11</text>
<rect x="0" y="476" width="22" height="1" fill="#ABABAB" />
<text x="11.00" y="472.80" font-size="10.8" fill="#111" text-anchor="middle">12</text>
<rect x="0" y="493" width="22" height="1" fill="#ABABAB" />
<text x="11.00" y="489.80" font-size="10.8" fill="#111" text-anchor="middle">13</text>
<rect x="0" y="510" width="22" height="1" fill="#ABABAB" />
<text x="11.00" y="506.80" font-size="10.8" fill="#111" text-anchor="middle">14</text>
<rect x="0" y="527" width="22" height="1" fill="#ABABAB" />
<text x="11.00" y="523.80" font-size="10.8" fill="#111" text-anchor="middle">15</text>
<rect x="0" y="544" width="22" height="1" fill="#ABABAB" />
<text x="11.00" y="540.80" font-size="10.8" fill="#111" text-anchor="middle">16</text>
<rect x="0" y="561" width="22" height="1" fill="#ABABAB" />
<text x="11.00" y="557.80" font-size="10.8" fill="#111" text-anchor="middle">17</text>
<rect x="0" y="578" width="22" height="1" fill="#ABABAB" />
<text x="11.00" y="574.80" font-size="10.8" fill="#111" text-anchor="middle">18</text>
<rect x="0" y="595" width="22" height="1" fill="#ABABAB" />
<text x="11.00" y="591.80" font-size="10.8" fill="#111" text-anchor="middle">19</text>
<rect x="0" y="612" width="22" height="1" fill="#ABABAB" />
<text x="11.00" y="608.80" font-size="10.8" fill="#111" text-anchor="middle">20</text>
<rect x="0" y="629" width="22" height="1" fill="#ABABAB" />
<text x="11.00" y="625.80" font-size="10.8" fill="#111" text-anchor="middle">21</text>
<rect x="0" y="646" width="22" height="1" fill="#ABABAB" />
<text x="11.00" y="642.80" font-size="10.8" fill="#111" text-anchor="middle">22</text>
<rect x="0" y="663" width="22" height="1" fill="#ABABAB" />
<text x="11.00" y="659.80" font-size="10.8" fill="#111" text-anchor="middle">23</text>
<rect x="0" y="680" width="22" height="1" fill="#ABABAB" />
<text x="11.00" y="676.80" font-size="10.8" fill="#111" text-anchor="middle">24</text>
<rect x="0" y="697" width="22" height="1" fill="#ABABAB" />
<text x="11.00" y="693.80" font-size="10.8" fill="#111" text-anchor="middle">25</text>
<rect x="0" y="714" width="22" height="1" fill="#ABABAB" />
<text x="11.00" y="710.80" font-size="10.8" fill="#111" text-anchor="middle">26</text>
<rect x="0" y="731" width="22" height="1" fill="#ABABAB" />
<text x="11.00" y="727.80" font-size="10.8" fill="#111" text-anchor="middle">27</text>
<rect x="0" y="748" width="22" height="1" fill="#ABABAB" />
<text x="11.00" y="744.80" font-size="10.8" fill="#111" text-anchor="middle">28</text>
<rect x="0" y="765" width="22" height="1" fill="#ABABAB" />
<text x="11.00" y="761.80" font-size="10.8" fill="#111" text-anchor="middle">29</text>
<rect x="0" y="782" width="22" height="1" fill="#ABABAB" />
<text x="11.00" y="778.80" font-size="10.8" fill="#111" text-anchor="middle">30</text>
<rect x="0" y="799" width="22" height="1" fill="#ABABAB" />
<text x="11.00" y="795.80" font-size="10.8" fill="#111" text-anchor="middle">31</text>
<rect x="0" y="816" width="22" height="1" fill="#ABABAB" />
<text x="11.00" y="812.80" font-size="10.8" fill="#111" text-anchor="middle">32</text>
<rect x="0" y="833" width="22" height="1" fill="#ABABAB" />
<text x="11.00" y="829.80" font-size="10.8" fill="#111" text-anchor="middle">33</text>
<rect x="0" y="850" width="22" height="1" fill="#ABABAB" />
<text x="11.00" y="846.80" font-size="10.8" fill="#111" text-anchor="middle">34</text>
<rect x="0" y="867" width="22" height="1" fill="#ABABAB" />
<text x="11.00" y="863.80" font-size="10.8" fill="#111" text-anchor="middle">35</text>
<rect x="0" y="884" width="22" height="1" fill="#ABABAB" />
<text x="11.00" y="880.80" font-size="10.8" fill="#111" text-anchor="middle">36</text>
<rect x="0" y="901" width="22" height="1" fill="#ABABAB" />
<text x="11.00" y="897.80" font-size="10.8" fill="#111" text-anchor="middle">37</text>
<rect x="0" y="918" width="22" height="1" fill="#ABABAB" />
<text x="11.00" y="914.80" font-size="10.8" fill="#111" text-anchor="middle">38</text>
<rect x="0" y="935" width="22" height="1" fill="#ABABAB" />
<text x="11.00" y="931.80" font-size="10.8" fill="#111" text-anchor="middle">39</text>
<rect x="0" y="952" width="22" height="1" fill="#ABABAB" />
<text x="11.00" y="948.80" font-size="10.8" fill="#111" text-anchor="middle">40</text>
<rect x="0" y="969" width="22" height="1" fill="#ABABAB" />
<text x="11.00" y="965.80" font-size="10.8" fill="#111" text-anchor="middle">41</text>
<rect x="0" y="986" width="22" height="1" fill="#ABABAB" />
<text x="11.00" y="982.80" font-size="10.8" fill="#111" text-anchor="middle">42</text>
<rect x="22" y="196" width="1" height="794" fill="#9B9B9B" />
<rect x="1898" y="212" width="1" height="779" fill="#9B9B9B" />
<rect x="0" y="990" width="1899" height="1" fill="#9B9B9B" />
<rect x="21" y="210" width="63" height="2" fill="#217346" />
<rect x="21" y="228" width="63" height="2" fill="#217346" />
<rect x="21" y="210" width="2" height="20" fill="#217346" />
<rect x="82" y="210" width="2" height="20" fill="#217346" />
<rect x="79" y="225" width="6" height="6" fill="#fff" />
<rect x="80" y="226" width="5" height="5" fill="#217346" />
<text x="85.00" y="225.50" font-size="10.8" fill="#FF0000" textLength="210.50" lengthAdjust="spacingAndGlyphs">Số bản ghi tối đa có thể import 1 lần là</text>
<text x="85.50" y="258.00" font-size="10.8" fill="#FF0000" textLength="200.00" lengthAdjust="spacingAndGlyphs">** Dòng 7 là dữ liệu mẫu (không xóa)</text>
<text x="85.50" y="274.50" font-size="10.8" fill="#FF0000" textLength="153.50" lengthAdjust="spacingAndGlyphs">** Nhập sản phẩm từ dòng 8</text>
<text x="42.50" y="340.50" font-size="10.8" fill="#000" font-weight="bold" textLength="19.00" lengthAdjust="spacingAndGlyphs">STT</text>
<text x="163.00" y="340.50" font-size="10.8" fill="#000" font-weight="bold" textLength="83.50" lengthAdjust="spacingAndGlyphs">Nguồn kết nối(<tspan fill="#FF0000">*</tspan>)</text>
<text x="396.00" y="340.50" font-size="10.8" fill="#000" font-weight="bold" textLength="94.50" lengthAdjust="spacingAndGlyphs">Tên khách hàng (<tspan fill="#FF0000">*</tspan>)</text>
<text x="608.50" y="340.50" font-size="10.8" fill="#000" font-weight="bold" textLength="94.00" lengthAdjust="spacingAndGlyphs">SĐT khách hàng(<tspan fill="#FF0000">*</tspan>)</text>
<text x="813.50" y="340.50" font-size="10.8" fill="#000" font-weight="bold" textLength="119.00" lengthAdjust="spacingAndGlyphs">Tin nhắn khách hàng (<tspan fill="#FF0000">*</tspan>)</text>
<text x="1058.00" y="340.50" font-size="10.8" fill="#000" font-weight="bold" textLength="37.50" lengthAdjust="spacingAndGlyphs">Dịch vụ</text>
<text x="1228.00" y="340.50" font-size="10.8" fill="#000" font-weight="bold" textLength="34.50" lengthAdjust="spacingAndGlyphs">Combo</text>
<text x="1370.00" y="332.60" font-size="10.8" fill="#000" font-weight="bold" textLength="76.50" lengthAdjust="spacingAndGlyphs">Giờ đặt lịch (<tspan fill="#FF0000">*</tspan>)</text>
<text x="1390.00" y="349.20" font-size="10.8" fill="#000" font-style="italic" textLength="35.00" lengthAdjust="spacingAndGlyphs">(HH:ss)</text>
<text x="1530.00" y="332.60" font-size="10.8" fill="#000" font-weight="bold" textLength="83.00" lengthAdjust="spacingAndGlyphs">Ngày đặt lịch (<tspan fill="#FF0000">*</tspan>)</text>
<text x="1538.00" y="349.20" font-size="10.8" fill="#000" font-style="italic" textLength="65.50" lengthAdjust="spacingAndGlyphs">(dd/mm/yyy)</text>
<text x="1737.00" y="340.50" font-size="10.8" fill="#000" font-weight="bold" textLength="37.50" lengthAdjust="spacingAndGlyphs">Ghi chú</text>
<text x="50.50" y="388.00" font-size="10.5" fill="#000" textLength="5.50" lengthAdjust="spacingAndGlyphs">1</text>
<text x="169.50" y="388.50" font-size="14" fill="#000" font-family="Liberation Serif" textLength="70.00" lengthAdjust="spacingAndGlyphs">Minh dương</text>
<text x="392.50" y="388.50" font-size="14" fill="#000" font-family="Liberation Serif" textLength="102.00" lengthAdjust="spacingAndGlyphs">NGUYỄN VĂN A</text>
<text x="621.00" y="388.50" font-size="14" fill="#000" font-family="Liberation Serif" textLength="70.00" lengthAdjust="spacingAndGlyphs">0888888899</text>
<text x="802.00" y="388.50" font-size="14" fill="#000" font-family="Liberation Serif" textLength="140.50" lengthAdjust="spacingAndGlyphs">EXAMPLE_TIN_NHAN</text>
<text x="1037.00" y="388.80" font-size="11" fill="#000" textLength="80.00" lengthAdjust="spacingAndGlyphs">TEST DỊCH VỤ 4</text>
<text x="1172.00" y="388.20" font-size="11" fill="#000" textLength="146.50" lengthAdjust="spacingAndGlyphs">Combo bọc răng sứ cao cấp</text>
<path d="M559 375h5l-5 5z" fill="#1E7B34" shape-rendering="geometricPrecision"/>
<text x="1599.00" y="964.70" font-size="19" fill="#000" opacity="0.2" textLength="157.50" lengthAdjust="spacingAndGlyphs">Activate Windows</text>
<text x="1599.00" y="986.20" font-size="14.7" fill="#000" opacity="0.2" textLength="236.00" lengthAdjust="spacingAndGlyphs">Go to Settings to activate Windows.</text>
<rect x="1899" y="196" width="20" height="795" fill="#E6E6E6" />
<rect x="1902" y="198" width="15" height="792" fill="#DCDCDC" />
<rect x="1902.5" y="198.5" width="14" height="14" fill="#fff" stroke="#ABABAB" stroke-width="1" />
<path d="M1906 207.5l3.5-4l3.5 4z" fill="#666" shape-rendering="geometricPrecision"/>
<rect x="1902.5" y="213.5" width="14" height="16" fill="#fff" stroke="#ABABAB" stroke-width="1" />
<rect x="1902.5" y="975.5" width="14" height="14" fill="#fff" stroke="#ABABAB" stroke-width="1" />
<path d="M1906 981l3.5 4l3.5-4z" fill="#666" shape-rendering="geometricPrecision"/>
<path d="M26 1003.5l5-4.5v9z" fill="#C0C0C0" shape-rendering="geometricPrecision"/>
<path d="M60 1003.5l-5-4.5v9z" fill="#C0C0C0" shape-rendering="geometricPrecision"/>
<rect x="101" y="990" width="53" height="25" fill="#fff" />
<rect x="100" y="990" width="1" height="25" fill="#ABABAB" />
<rect x="153" y="990" width="1" height="25" fill="#ABABAB" />
<rect x="100" y="1013" width="54" height="2" fill="#217346" />
<text x="112.50" y="1007.70" font-size="13" fill="#217346" font-weight="bold" textLength="28.50" lengthAdjust="spacingAndGlyphs">Data</text>
<text x="168.00" y="1007.70" font-size="13" fill="#444444" textLength="82.50" lengthAdjust="spacingAndGlyphs">nguon_ket_noi</text>
<text x="280.00" y="1007.70" font-size="13" fill="#444444" textLength="42.00" lengthAdjust="spacingAndGlyphs">dich_vu</text>
<text x="348.00" y="1007.70" font-size="13" fill="#444444" textLength="40.50" lengthAdjust="spacingAndGlyphs">combo</text>
<rect x="266" y="994" width="1" height="20" fill="#ABABAB" />
<rect x="336" y="994" width="1" height="20" fill="#ABABAB" />
<rect x="401" y="994" width="1" height="20" fill="#ABABAB" />
<g shape-rendering="geometricPrecision">
<circle cx="442.7" cy="1004" r="7.3" fill="none" stroke="#666" stroke-width="1.1"/>
<path d="M438.7 1004h8M442.7 1000v8" fill="none" stroke="#666" stroke-width="1.4" />
</g>
<rect x="1152" y="999" width="2" height="2" fill="#A6A6A6" />
<rect x="1152" y="1003" width="2" height="2" fill="#A6A6A6" />
<rect x="1152" y="1007" width="2" height="2" fill="#A6A6A6" />
<rect x="1169" y="997" width="727" height="15" fill="#DCDCDC" />
<rect x="1169.5" y="997.5" width="14" height="14" fill="#fff" stroke="#ABABAB" stroke-width="1" />
<path d="M1178.5 1000.500v8l-4.500-4z" fill="#777" shape-rendering="geometricPrecision"/>
<rect x="1184.5" y="997.5" width="452" height="14" fill="#fff" stroke="#ABABAB" stroke-width="1" />
<rect x="1881.5" y="997.5" width="14" height="14" fill="#fff" stroke="#ABABAB" stroke-width="1" />
<path d="M1886.5 1000.500v8l4.500-4z" fill="#777" shape-rendering="geometricPrecision"/>
<text x="7.50" y="1033.00" font-size="11" fill="#444444" textLength="30.50" lengthAdjust="spacingAndGlyphs">Ready</text>
<rect x="1634" y="1019" width="38" height="21" fill="#C8C8C8" />
<rect x="1646" y="1022" width="13" height="13" fill="#DADADA" />
<rect x="1646" y="1022" width="1" height="13" fill="#6A6A6A" />
<rect x="1646" y="1022" width="13" height="1" fill="#6A6A6A" />
<rect x="1650" y="1022" width="1" height="13" fill="#6A6A6A" />
<rect x="1646" y="1026" width="13" height="1" fill="#6A6A6A" />
<rect x="1654" y="1022" width="1" height="13" fill="#6A6A6A" />
<rect x="1646" y="1030" width="13" height="1" fill="#6A6A6A" />
<rect x="1658" y="1022" width="1" height="13" fill="#6A6A6A" />
<rect x="1646" y="1034" width="13" height="1" fill="#6A6A6A" />
<rect x="1684.5" y="1022.5" width="13" height="12" fill="#fff" stroke="#6A6A6A" stroke-width="1" />
<rect x="1687.5" y="1024.5" width="7" height="8" fill="#fff" stroke="#6A6A6A" stroke-width="1" />
<rect x="1689" y="1026" width="4" height="1" fill="#6A6A6A" />
<rect x="1689" y="1028" width="4" height="1" fill="#6A6A6A" />
<rect x="1689" y="1030" width="4" height="1" fill="#6A6A6A" />
<rect x="1722.5" y="1022.5" width="13" height="12" fill="#fff" stroke="#6A6A6A" stroke-width="1" />
<rect x="1726" y="1023" width="1" height="7" fill="#6A6A6A" />
<rect x="1730" y="1023" width="1" height="7" fill="#6A6A6A" />
<rect x="1723" y="1029" width="8" height="1" fill="#6A6A6A" />
<rect x="1753" y="1028" width="6" height="2" fill="#555" />
<rect x="1763" y="1028" width="100" height="1" fill="#8A8A8A" />
<rect x="1803" y="1023" width="4" height="11" fill="#555" />
<rect x="1813" y="1025" width="1" height="7" fill="#8A8A8A" />
<rect x="1867" y="1028" width="8" height="2" fill="#555" />
<rect x="1870" y="1025" width="2" height="8" fill="#555" />
<text x="1889.50" y="1033.00" font-size="11" fill="#444444" textLength="21.50" lengthAdjust="spacingAndGlyphs">85%</text>
</svg>
</body></html>
